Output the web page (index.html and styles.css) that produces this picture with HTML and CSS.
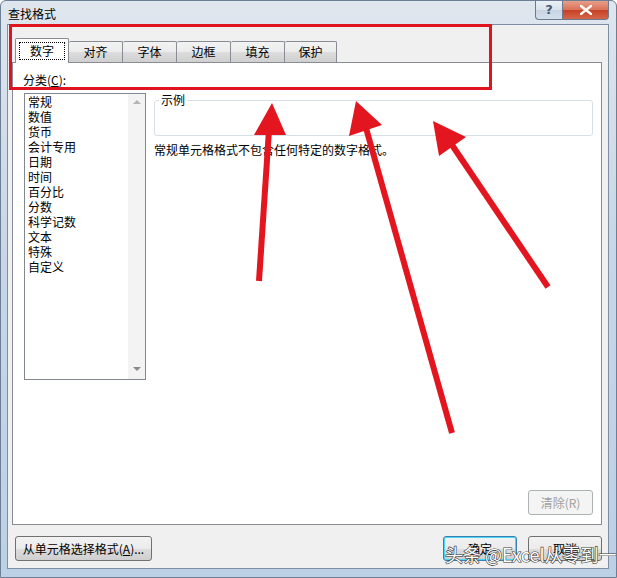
FILE: index.html
```html
<!DOCTYPE html>
<html lang="zh-CN">
<head>
  <meta charset="UTF-8" />
  <title>查找格式</title>
  <link rel="stylesheet" href="styles.css">
</head>
<body>
  <div class="window">

    <div class="titlebar">
      <span class="title">查找格式</span>
      <div class="caption-btns">
        <div class="cap help">?</div>
        <div class="cap close">
          <svg width="12" height="10" viewBox="0 0 12 10">
            <path d="M1,1 L11,9 M11,1 L1,9" stroke="#fff" stroke-width="2.4" stroke-linecap="square" />
          </svg>
        </div>
      </div>
    </div>

    <div class="client">
      <div class="tabs">
        <div class="tab selected"><span class="focus">数字</span></div>
        <div class="tab">对齐</div>
        <div class="tab">字体</div>
        <div class="tab">边框</div>
        <div class="tab">填充</div>
        <div class="tab last">保护</div>
      </div>

      <div class="panel">
        <div class="cat-label">分类(<u>C</u>):</div>
        <div class="panel-body">
          <div class="listbox">
            <ul class="items">
              <li>常规</li>
              <li>数值</li>
              <li>货币</li>
              <li>会计专用</li>
              <li>日期</li>
              <li>时间</li>
              <li>百分比</li>
              <li>分数</li>
              <li>科学记数</li>
              <li>文本</li>
              <li>特殊</li>
              <li>自定义</li>
            </ul>
            <div class="scroll">
              <span class="arrow up"></span>
              <span class="arrow down"></span>
            </div>
          </div>

          <div class="right">
            <fieldset class="sample">
              <legend>示例</legend>
            </fieldset>
            <p class="desc">常规单元格格式不包含任何特定的数字格式。</p>
            <div class="clear-row">
              <button class="btn disabled">清除(R)</button>
            </div>
          </div>
        </div>
      </div>

      <div class="footer">
        <button class="btn pick">从单元格选择格式(<u>A</u>)...</button>
        <div class="footer-right">
          <button class="btn ok">确定</button>
          <button class="btn">取消</button>
        </div>
      </div>
    </div>

    <!-- annotations drawn on top of the screenshot -->
    <svg class="marks" width="617" height="578" viewBox="0 0 617 578">
      <rect x="10.5" y="25.5" width="480" height="63" fill="none" stroke="#e0141f" stroke-width="3" />
      <g stroke="#e3151f" stroke-width="6" fill="#e3151f">
        <line x1="259" y1="281" x2="269" y2="130" />
        <polygon stroke="none" points="272,103 254,135 286,135" />
        <line x1="452" y1="433" x2="366" y2="128" />
        <polygon stroke="none" points="356,101 349,136 382,125" />
        <line x1="548" y1="287" x2="452" y2="145" />
        <polygon stroke="none" points="433,121 439,156 466,137" />
      </g>
    </svg>

    <div class="watermark">头条 @Excel从零到一</div>
  </div>
</body>
</html>
```

FILE: styles.css
```css
* {
  box-sizing: border-box;
}

body {
  margin: 0;
  font-family: "Noto Sans CJK SC", "Liberation Sans", sans-serif;
  font-size: 12px;
  color: #000;
  background: #fff;
}

.window {
  position: relative;
  width: 617px;
  height: 578px;
  background: linear-gradient(to bottom, #dfe6ee 0%, #c9d7e7 40%, #bcd0e6 100%);
  border: 1px solid #6d7f95;
  border-radius: 6px 6px 0 0;
  overflow: hidden;
}

.titlebar {
  display: flex;
  height: 23px;
  align-items: flex-start;
}

.title {
  margin: 6px 0 0 7px;
  line-height: 14px;
  font-size: 12px;
}

.caption-btns {
  display: flex;
  margin-left: auto;
  margin-right: 7px;
  margin-top: -1px;
}

.cap {
  height: 20px;
  border: 1px solid #6b7b8f;
  border-top: none;
  display: flex;
  align-items: center;
  justify-content: center;
}

.help {
  width: 27px;
  border-radius: 0 0 0 4px;
  border-right: none;
  background: linear-gradient(to bottom, #eef2f7 0%, #d9e2ec 50%, #c7d3e1 51%, #d3dfec 100%);
  color: #4a5a6d;
  font-family: "DejaVu Sans", sans-serif;
  font-size: 13px;
  font-weight: bold;
}

.close {
  width: 47px;
  border-radius: 0 0 4px 0;
  background: linear-gradient(to bottom, #e9a48e 0%, #d9735a 50%, #c63e22 51%, #d4664a 100%);
}

.client {
  margin: 0 7px 0 6px;
  height: 545px;
  background: #f0f0f0;
  border: 1px solid #7f8fa3;
  padding: 13px 6px 7px 4px;
  display: flex;
  flex-direction: column;
}

.tabs {
  display: flex;
  height: 24px;
  padding-left: 3px;
  align-items: flex-end;
  position: relative;
  z-index: 2;
}

.tab {
  width: 54px;
  height: 21px;
  border: 1px solid #898c95;
  border-bottom: none;
  border-left: none;
  border-radius: 2px 2px 0 0;
  background: linear-gradient(to bottom, #f3f3f3 0%, #ebebeb 50%, #dddddd 51%, #cfcfcf 100%);
  text-align: center;
  line-height: 19px;
}

.tab.last {
  width: 52px;
}

.tab.selected {
  height: 25px;
  margin-bottom: -1px;
  border-left: 1px solid #898c95;
  background: #fff;
  padding: 3px 3px 0;
}

.focus {
  display: block;
  border: 1px dotted #000;
  line-height: 16px;
}

.panel {
  flex: 1;
  background: #fff;
  border: 1px solid #898c95;
  padding: 9px 8px 9px 10px;
  display: flex;
  flex-direction: column;
}

.cat-label {
  line-height: 16px;
  margin-bottom: 5px;
}

.panel-body {
  flex: 1;
  display: flex;
}

.listbox {
  width: 122px;
  height: 287px;
  margin-left: 1px;
  border: 1px solid #828790;
  display: flex;
}

.items {
  flex: 1;
  list-style: none;
  margin: 0;
  padding: 0 0 0 3px;
  line-height: 15px;
}

.scroll {
  width: 17px;
  background: #f3f3f3;
  position: relative;
}

.arrow {
  position: absolute;
  left: 5px;
  width: 0;
  height: 0;
  border-left: 4px solid transparent;
  border-right: 4px solid transparent;
}

.arrow.up {
  top: 6px;
  border-bottom: 4px solid #b4b4b4;
}

.arrow.down {
  bottom: 8px;
  border-top: 4px solid #8a8a8a;
}

.right {
  flex: 1;
  margin-left: 8px;
  display: flex;
  flex-direction: column;
}

.sample {
  margin: 0;
  padding: 0;
  height: 43px;
  border: 1px solid #d5dfe5;
  border-radius: 3px;
}

.sample legend {
  margin-left: 4px;
  padding: 0 2px;
  line-height: 14px;
}

.desc {
  margin: 6px 0 0;
  line-height: 16px;
}

.clear-row {
  margin-top: auto;
  display: flex;
  justify-content: flex-end;
}

.btn {
  font-family: inherit;
  font-size: 12px;
  height: 25px;
  width: 74px;
  padding: 0;
  border: 1px solid #707070;
  border-radius: 3px;
  background: linear-gradient(to bottom, #f2f2f2 0%, #ebebeb 50%, #dddddd 51%, #cfcfcf 100%);
  color: #000;
  line-height: 22px;
}

.btn.disabled {
  width: 65px;
  color: #a0a0a0;
  border-color: #adb2b5;
  background: #f4f4f4;
}

.btn.ok {
  border-color: #3c7fb1;
  box-shadow: inset 0 0 0 1px #48d7f9;
}

.footer {
  display: flex;
  padding: 11px 0 0 3px;
}

.pick {
  width: 137px;
}

.footer-right {
  margin-left: auto;
  display: flex;
  gap: 11px;
}

.marks {
  position: absolute;
  left: -1px;
  top: -1px;
  pointer-events: none;
}

.watermark {
  position: absolute;
  left: 444px;
  top: 543px;
  font-size: 18px;
  line-height: 20px;
  color: #fff;
  -webkit-text-stroke: 1.2px #3a3a3a;
  paint-order: stroke fill;
  white-space: nowrap;
}
```
